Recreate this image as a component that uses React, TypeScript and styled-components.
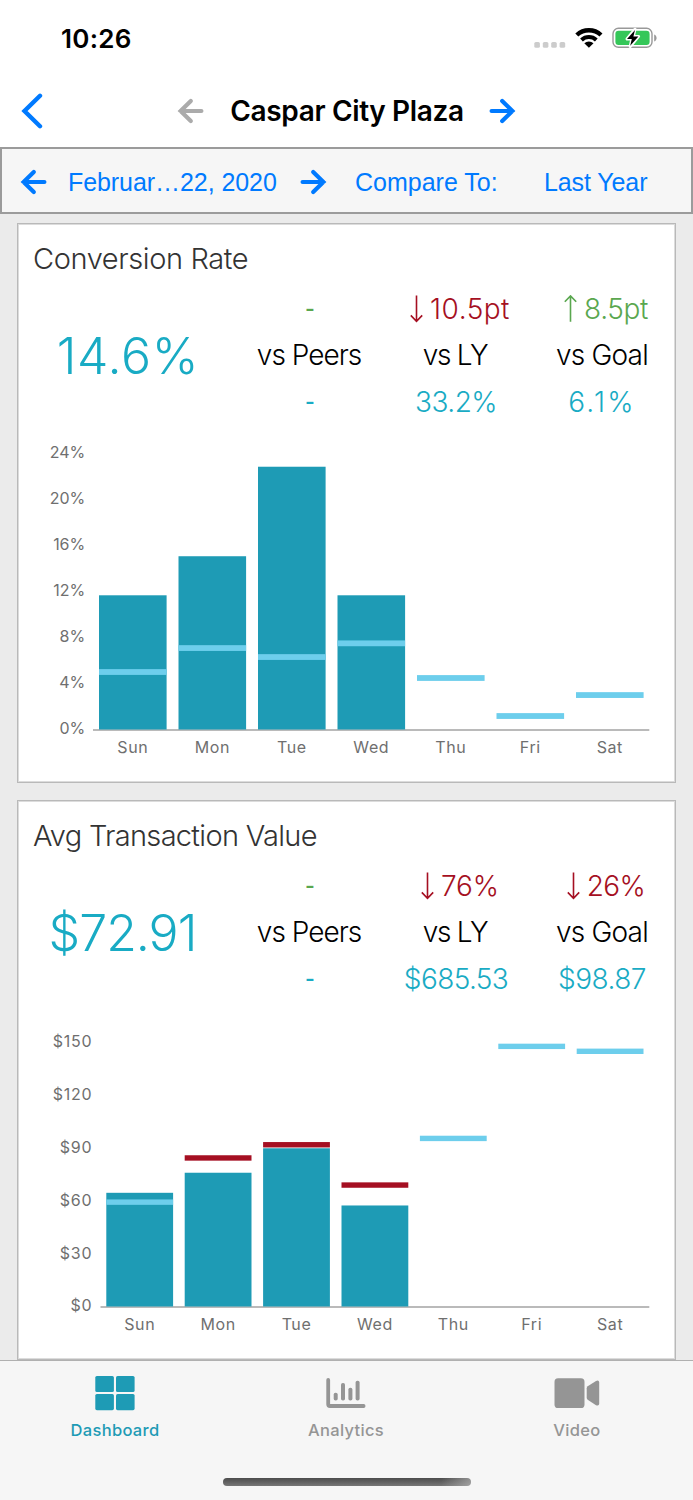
import React from "react";
import styled, { createGlobalStyle } from "styled-components";

const BLUE = "#007aff";
const TEAL = "#1e9bb5";
const AQUA = "#19abc4";
const SKY = "#6dceec";
const RED = "#a50f22";
const GREEN = "#5aa74f";
const GRAY = "#959595";

const ui = `Inter, "Liberation Sans", sans-serif`;
const helv = `"Liberation Sans", Arial, sans-serif`;

const Global = createGlobalStyle`
  *, *::before, *::after { box-sizing: border-box; }
  html, body { margin: 0; padding: 0; }
  body { background: #ebebeb; font-family: ${ui}; overflow: hidden; }
`;

const Screen = styled.div`
  display: flex;
  flex-direction: column;
  width: 693px;
  height: 1500px;
  overflow: hidden;
  background: #ebebeb;
`;

const StatusBar = styled.div`
  flex: none;
  display: flex;
  align-items: center;
  justify-content: space-between;
  height: 76px;
  padding: 0 36px 0 61px;
  background: #fff;
`;

const Clock = styled.div`
  padding-top: 2px;
  font-size: 26px;
  font-weight: 600;
  letter-spacing: 0.3px;
  line-height: 32px;
`;

const StatusIcons = styled.svg`
  display: block;
  width: 124px;
  height: 28px;
`;

const NavBar = styled.header`
  flex: none;
  display: flex;
  align-items: center;
  height: 71px;
  padding: 0 0 1px 20px;
  background: #fff;
`;

const NavTitle = styled.h1`
  width: 234px;
  margin: 0 24px 0 25px;
  font-size: 28px;
  font-weight: 600;
  letter-spacing: -0.35px;
  line-height: 36px;
  text-align: center;
  white-space: nowrap;
`;

const Glyph = styled.svg<{ $gap?: number }>`
  flex: none;
  display: block;
  margin-left: ${(p) => p.$gap ?? 0}px;
`;

const FilterBar = styled.div`
  flex: none;
  display: flex;
  align-items: center;
  height: 67px;
  padding: 2px 0 0 19px;
  border: 2px solid #9b9b9b;
  background: #f6f6f6;
`;

const FilterText = styled.div<{ $w: number; $gap: number; $track?: number }>`
  flex: none;
  width: ${(p) => p.$w}px;
  margin-left: ${(p) => p.$gap}px;
  color: ${BLUE};
  font-family: ${helv};
  font-size: 25px;
  letter-spacing: ${(p) => p.$track ?? 0}px;
  line-height: 32px;
  white-space: nowrap;
`;

const Content = styled.main`
  flex: none;
  display: flex;
  flex-direction: column;
  gap: 17px;
  height: 1146px;
  padding: 9px 17px 0;
  overflow: hidden;
`;

const Card = styled.section`
  flex: none;
  display: flex;
  flex-direction: column;
  height: 560px;
  padding: 15px 0 0 1px;
  border: 1px solid #b9b9b9;
  box-shadow: inset 0 0 0 1px #dcdcdc;
  background: #fff;
`;

const CardTitle = styled.h2<{ $track: number }>`
  margin: 0 0 7px 14px;
  color: #333;
  font-size: 29px;
  font-weight: 300;
  letter-spacing: ${(p) => p.$track}px;
  line-height: 40px;
  white-space: nowrap;
`;

const Stats = styled.div`
  flex: none;
  display: grid;
  grid-template-columns: 218px 146px 146px 146px;
  height: 139px;
`;

const BigValue = styled.div<{ $track: number; $pull?: number }>`
  display: flex;
  align-items: center;
  justify-content: center;
  padding-right: ${(p) => p.$pull ?? 0}px;
  color: ${AQUA};
  font-size: 50px;
  font-weight: 300;
  letter-spacing: ${(p) => p.$track}px;
`;

const Comparison = styled.div`
  display: grid;
  grid-template-rows: repeat(3, 46.3px);
  justify-items: center;
  align-items: center;
`;

const StatText = styled.div<{ $color: string; $track: number; $pull?: number }>`
  padding-right: ${(p) => p.$pull ?? 0}px;
  color: ${(p) => p.$color};
  font-size: 28px;
  font-weight: 300;
  letter-spacing: ${(p) => p.$track}px;
  line-height: 34px;
  white-space: nowrap;
`;

const Delta = styled(StatText)`
  display: flex;
  align-items: center;
  gap: 7px;
  padding-left: 8px;
`;

const Dash = styled.span<{ $color: string }>`
  padding-bottom: 2px;
  color: ${(p) => p.$color};
  font-family: ${helv};
  font-size: 28px;
  line-height: 34px;
`;

const Plot = styled.svg`
  flex: none;
  display: block;
  font-family: ${ui};
  font-size: 16px;
  fill: #6f6f6f;
`;

const TabBar = styled.nav`
  flex: none;
  display: grid;
  grid-template-columns: repeat(3, 1fr);
  grid-template-rows: 94px auto;
  height: 140px;
  border-top: 1px solid #b0b0b0;
  background: #f6f6f6;
`;

const Tab = styled.div<{ $active?: boolean }>`
  display: flex;
  flex-direction: column;
  align-items: center;
  padding: 12px 1px 0 0;
  color: ${(p) => (p.$active ? TEAL : GRAY)};
  font-size: 16.5px;
  font-weight: 500;
  letter-spacing: 0.32px;
  line-height: 22px;
`;

const TabIcon = styled.svg`
  display: block;
  width: 60px;
  height: 40px;
  margin-bottom: 6px;
  fill: currentColor;
`;

const HomeIndicator = styled.div`
  grid-column: 1 / -1;
  justify-self: center;
  width: 248px;
  height: 8px;
  margin-top: 23px;
  border-radius: 4px;
  background: linear-gradient(90deg, transparent 88%, rgba(190, 190, 190, 0.6)),
    linear-gradient(#4c4c4c, #767676);
`;

function Arrow({ dir, color, gap }: { dir: "left" | "right"; color: string; gap?: number }) {
  return (
    <Glyph $gap={gap} width="28" height="28" viewBox="0 0 28 28">
      <path
        d="M3.6 14H24.4M13.8 4L3.6 14L13.8 24"
        transform={dir === "right" ? "rotate(180 14 14)" : undefined}
        fill="none"
        stroke={color}
        strokeWidth="4.2"
        strokeLinecap="round"
        strokeLinejoin="miter"
      />
    </Glyph>
  );
}

function ThinArrow({ up }: { up?: boolean }) {
  return (
    <svg width="13" height="28" viewBox="0 0 13 28">
      <path
        d="M6.5 0.5V26.3M0.8 20.4L6.5 26.3L12.2 20.4"
        transform={up ? "rotate(180 6.5 13.6)" : undefined}
        fill="none"
        stroke="currentColor"
        strokeWidth="1.6"
      />
    </svg>
  );
}

interface Compare {
  label: string;
  labelTrack: number;
  labelPull?: number;
  value?: string;
  valueTrack?: number;
  delta?: string;
  deltaTrack?: number;
  up?: boolean;
}

function CompareColumn(c: Compare) {
  return (
    <Comparison>
      {c.delta ? (
        <Delta $color={c.up ? GREEN : RED} $track={c.deltaTrack ?? 0}>
          <ThinArrow up={c.up} />
          {c.delta}
        </Delta>
      ) : (
        <Dash $color={GREEN}>-</Dash>
      )}
      <StatText $color="#000" $track={c.labelTrack} $pull={c.labelPull}>
        {c.label}
      </StatText>
      {c.value ? (
        <StatText $color={AQUA} $track={c.valueTrack ?? 0}>
          {c.value}
        </StatText>
      ) : (
        <Dash $color={AQUA}>-</Dash>
      )}
    </Comparison>
  );
}

interface ChartProps {
  format: (n: number) => string;
  tick: number;
  ticks: number;
  unit: number;
  axisLeft: number;
  labelRight: number;
  labelTrack: number;
  first: number;
  step: number;
  width: number;
  mark: number;
  days: { day: string; value?: number; goal: number }[];
}

const BASE = 304.5;

function Chart(c: ChartProps) {
  return (
    <Plot width="655" height="355" viewBox="0 0 655 355">
      {Array.from({ length: c.ticks + 1 }, (_, i) => (
        <text
          key={i}
          x={c.labelRight}
          y={BASE + 4.9 - i * c.tick * c.unit}
          textAnchor="end"
          letterSpacing={c.labelTrack}
        >
          {c.format(i * c.tick)}
        </text>
      ))}
      <path d={`M${c.axisLeft} ${BASE + 0.5}H630.3`} stroke="#a3a3a3" strokeWidth="1.4" />
      {c.days.map((d, i) => {
        const x = c.first + i * c.step;
        const missed = d.value !== undefined && d.value < d.goal;
        return (
          <g key={d.day}>
            {d.value !== undefined && (
              <rect
                x={x}
                y={BASE - d.value * c.unit}
                width={c.width}
                height={d.value * c.unit}
                fill={TEAL}
              />
            )}
            <rect
              x={x}
              y={BASE - d.goal * c.unit - c.mark / 2}
              width={c.width}
              height={c.mark}
              fill={missed ? RED : SKY}
            />
            <text x={x + c.width / 2} y={BASE + 23.3} textAnchor="middle" letterSpacing="0.6">
              {d.day}
            </text>
          </g>
        );
      })}
    </Plot>
  );
}

export default function App() {
  return (
    <>
      <Global />
      <Screen>
        <StatusBar>
          <Clock>10:26</Clock>
          <StatusIcons viewBox="533 24 124 28">
            <g fill="#cccccc">
              {[534.3, 542.8, 551.2, 559.6].map((x) => (
                <rect key={x} x={x} y="42" width="5.6" height="5.8" rx="1.6" />
              ))}
            </g>
            <g fill="none" stroke="#000">
              <path d="M576.8 35A17.8 17.8 0 0 1 601 35" strokeWidth="4.4" />
              <path d="M581.5 40A10.9 10.9 0 0 1 596.3 40" strokeWidth="4" />
            </g>
            <path d="M588.9 47.8L584.3 43.3A6.6 6.6 0 0 1 593.5 43.3Z" />
            <rect x="613" y="28.3" width="39" height="19" rx="5.4" fill="none" stroke="#999" strokeWidth="1.4" />
            <path d="M654.2 34.4C657.4 35.6 657.4 40.2 654.2 41.4Z" fill="#999" />
            <rect x="615.4" y="30.7" width="34.2" height="14.2" rx="3.2" fill="#35c759" />
            <path
              d="M635 29.2L627 39H631.8L630.2 46.6L638.6 36.4H633.4Z"
              stroke="#fff"
              strokeWidth="3"
              strokeLinejoin="round"
            />
            <path d="M635 30L627 39H631.8L630.2 45.8L638.4 36.6H633.4Z" />
          </StatusIcons>
        </StatusBar>

        <NavBar>
          <Glyph width="24" height="36" viewBox="0 0 24 36">
            <path
              d="M20 2.8L4.5 18L20 33.2"
              fill="none"
              stroke={BLUE}
              strokeWidth="4.4"
              strokeLinecap="round"
              strokeLinejoin="miter"
            />
          </Glyph>
          <Arrow dir="left" color="#ababab" gap={133} />
          <NavTitle>Caspar City Plaza</NavTitle>
          <Arrow dir="right" color={BLUE} />
        </NavBar>

        <FilterBar>
          <Arrow dir="left" color={BLUE} gap={-1} />
          <FilterText $w={210} $gap={20} $track={-0.07}>
            Februar…22, 2020
          </FilterText>
          <Arrow dir="right" color={BLUE} gap={21} />
          <FilterText $w={144} $gap={28}>
            Compare To:
          </FilterText>
          <FilterText $w={106} $gap={45} $track={-0.1}>
            Last Year
          </FilterText>
        </FilterBar>

        <Content>
          <Card>
            <CardTitle $track={-0.4}>Conversion Rate</CardTitle>
            <Stats>
              <BigValue $track={0.7}>14.6%</BigValue>
              <CompareColumn label="vs Peers" labelTrack={-1} labelPull={2} />
              <CompareColumn
                label="vs LY"
                labelTrack={-1.3}
                labelPull={2}
                delta="10.5pt"
                deltaTrack={0.5}
                value="33.2%"
                valueTrack={-0.5}
              />
              <CompareColumn
                label="vs Goal"
                labelTrack={-0.8}
                delta="8.5pt"
                deltaTrack={-0.4}
                up
                value="6.1%"
                valueTrack={2.2}
              />
            </Stats>
            <Chart
              format={(n) => `${n}%`}
              tick={4}
              ticks={6}
              unit={11.52}
              axisLeft={74}
              labelRight={66}
              labelTrack={-0.1}
              first={80}
              step={79.5}
              width={67.6}
              mark={5.8}
              days={[
                { day: "Sun", value: 11.65, goal: 4.99 },
                { day: "Mon", value: 15.04, goal: 7.07 },
                { day: "Tue", value: 22.81, goal: 6.29 },
                { day: "Wed", value: 11.65, goal: 7.48 },
                { day: "Thu", goal: 4.47 },
                { day: "Fri", goal: 1.17 },
                { day: "Sat", goal: 2.99 },
              ]}
            />
          </Card>
          <Card>
            <CardTitle $track={-0.7}>Avg Transaction Value</CardTitle>
            <Stats>
              <BigValue $track={-1} $pull={11}>
                $72.91
              </BigValue>
              <CompareColumn label="vs Peers" labelTrack={-1} labelPull={2} />
              <CompareColumn
                label="vs LY"
                labelTrack={-1.3}
                labelPull={2}
                delta="76%"
                deltaTrack={-0.1}
                value="$685.53"
                valueTrack={-0.6}
              />
              <CompareColumn
                label="vs Goal"
                labelTrack={-0.8}
                delta="26%"
                deltaTrack={-0.6}
                value="$98.87"
                valueTrack={-0.5}
              />
            </Stats>
            <Chart
              format={(n) => `$${n}`}
              tick={30}
              ticks={5}
              unit={1.76}
              axisLeft={81.5}
              labelRight={73.2}
              labelTrack={0.7}
              first={87.3}
              step={78.4}
              width={66.8}
              mark={5.4}
              days={[
                { day: "Sun", value: 64.6, goal: 59.3 },
                { day: "Mon", value: 76, goal: 84.4 },
                { day: "Tue", value: 89.9, goal: 91.9 },
                { day: "Wed", value: 57.4, goal: 69 },
                { day: "Thu", goal: 95.5 },
                { day: "Fri", goal: 147.8 },
                { day: "Sat", goal: 145 },
              ]}
            />
          </Card>
        </Content>

        <TabBar>
          <Tab $active>
            <TabIcon viewBox="0 0 60 40">
              <rect x="10.3" y="3" width="18.6" height="16" rx="1.6" />
              <rect x="31" y="3" width="18.6" height="16" rx="1.6" />
              <rect x="10.3" y="21" width="18.6" height="16.2" rx="1.6" />
              <rect x="31" y="21" width="18.6" height="16.2" rx="1.6" />
            </TabIcon>
            Dashboard
          </Tab>
          <Tab>
            <TabIcon viewBox="0 0 60 40">
              <path
                d="M12.2 7V31.2Q12.2 33 14 33H47.6"
                fill="none"
                stroke="currentColor"
                strokeWidth="3.8"
                strokeLinecap="round"
              />
              <rect x="17.7" y="19.8" width="4" height="7.8" rx="1.8" />
              <rect x="25" y="10" width="4" height="17.6" rx="1.8" />
              <rect x="32.4" y="14.8" width="4" height="12.8" rx="1.8" />
              <rect x="39.6" y="7.8" width="4" height="19.8" rx="1.8" />
            </TabIcon>
            Analytics
          </Tab>
          <Tab>
            <TabIcon viewBox="0 0 60 40">
              <rect x="7.5" y="5.3" width="30" height="29.7" rx="3.6" />
              <path d="M39.7 15.2Q39.7 14 40.7 13.2L49 7.9Q52 6.6 52.2 9.4V30.8Q52 33.4 49 32.2L40.7 26.8Q39.7 26 39.7 24.8Z" />
            </TabIcon>
            Video
          </Tab>
          <HomeIndicator />
        </TabBar>
      </Screen>
    </>
  );
}
